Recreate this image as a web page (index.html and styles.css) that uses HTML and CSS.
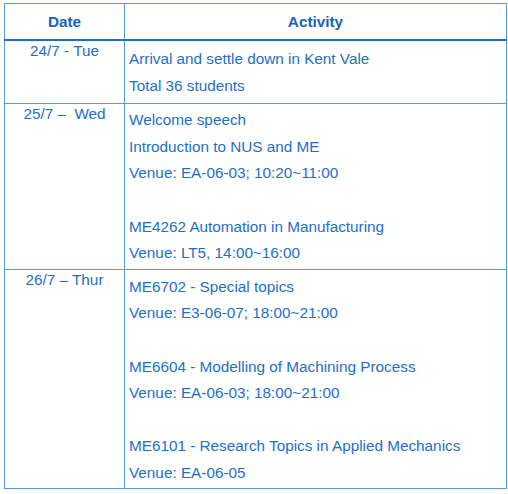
FILE: index.html
```html
<!DOCTYPE html>
<html>
<head>
<meta charset="utf-8">
<link rel="stylesheet" href="styles.css">
</head>
<body>
<table class="schedule">
  <thead>
    <tr>
      <th class="col-date">Date</th>
      <th class="col-act">Activity</th>
    </tr>
  </thead>
  <tbody>
    <tr class="row-first">
      <td class="date">24/7 - Tue</td>
      <td class="act">
        <div class="line">Arrival and settle down in Kent Vale</div>
        <div class="line">Total 36 students</div>
      </td>
    </tr>
    <tr>
      <td class="date">25/7 –&nbsp; Wed</td>
      <td class="act">
        <div class="line">Welcome speech</div>
        <div class="line">Introduction to NUS and ME</div>
        <div class="line">Venue: EA-06-03; 10:20~11:00</div>
        <div class="line"></div>
        <div class="line">ME4262 Automation in Manufacturing</div>
        <div class="line">Venue: LT5, 14:00~16:00</div>
      </td>
    </tr>
    <tr class="row-last">
      <td class="date">26/7 – Thur</td>
      <td class="act">
        <div class="line">ME6702 - Special topics</div>
        <div class="line">Venue: E3-06-07; 18:00~21:00</div>
        <div class="line"></div>
        <div class="line">ME6604 - Modelling of Machining Process</div>
        <div class="line">Venue: EA-06-03; 18:00~21:00</div>
        <div class="line"></div>
        <div class="line">ME6101 - Research Topics in Applied Mechanics</div>
        <div class="line">Venue: EA-06-05</div>
      </td>
    </tr>
  </tbody>
</table>
</body>
</html>
```
FILE: styles.css
```css
html, body {
  margin: 0;
  padding: 0;
  background: #ffffff;
}
body {
  padding: 3px 0 0 4px;
  font-family: "Liberation Sans", Arial, sans-serif;
  font-size: 15.3px;
  color: #1f6fc6;
}
.schedule {
  border-collapse: collapse;
  width: 501px;
  table-layout: fixed;
}
.schedule th,
.schedule td {
  border: 1px solid #5b9bd5;
  padding: 0;
}
.col-date { width: 119px; }
.col-act { width: 381px; }
.schedule th {
  height: 35px;
  font-weight: bold;
  color: #1a63bb;
  text-align: center;
  vertical-align: middle;
  border-bottom: 2px solid #1a6fc4;
}
.date {
  text-align: center;
  vertical-align: top;
  line-height: 16px;
  padding-top: 2px !important;
}
.act {
  vertical-align: top;
  padding: 3px 4px 2px 4px !important;
}
.row-first .act {
  padding-top: 5px !important;
  padding-bottom: 4px !important;
}
.row-last .act {
  padding-top: 4px !important;
  padding-bottom: 1px !important;
}
.line {
  height: 26.6px;
  line-height: 26.6px;
  white-space: nowrap;
}
```
